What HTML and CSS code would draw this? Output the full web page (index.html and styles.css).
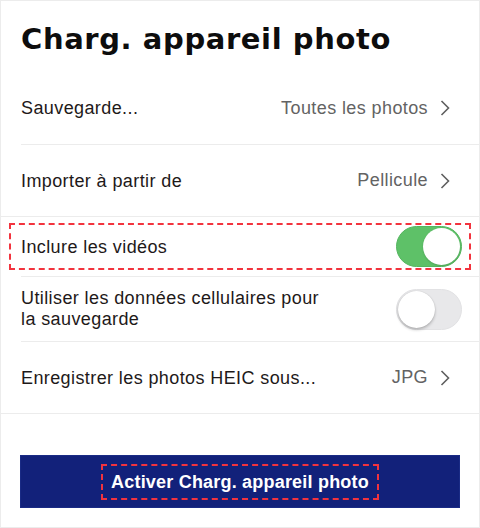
FILE: index.html
```html
<!DOCTYPE html>
<html lang="fr">
<head>
<meta charset="utf-8">
<title>Charg. appareil photo</title>
<link rel="stylesheet" href="styles.css">
</head>
<body>
<div class="page">
  <h1 class="title">Charg. appareil photo</h1>
  <div class="list">
    <div class="row inset h73">
      <span class="label">Sauvegarde...</span>
      <span class="value">Toutes les photos</span>
      <svg class="chev" width="10" height="16" viewBox="0 0 10 16"><path d="M1.5 1 L8.5 8 L1.5 15" fill="none" stroke="#5f5f5f" stroke-width="1.6"/></svg>
    </div>
    <div class="row full h72">
      <span class="label">Importer à partir de</span>
      <span class="value">Pellicule</span>
      <svg class="chev" width="10" height="16" viewBox="0 0 10 16"><path d="M1.5 1 L8.5 8 L1.5 15" fill="none" stroke="#5f5f5f" stroke-width="1.6"/></svg>
    </div>
    <div class="row inset h60 marked">
      <span class="label">Inclure les vidéos</span>
      <span class="switch on"><span class="knob"></span></span>
    </div>
    <div class="row inset h65">
      <span class="label two">Utiliser les données cellulaires pour la sauvegarde</span>
      <span class="switch off"><span class="knob"></span></span>
    </div>
    <div class="row full h72">
      <span class="label">Enregistrer les photos HEIC sous...</span>
      <span class="value">JPG</span>
      <svg class="chev" width="10" height="16" viewBox="0 0 10 16"><path d="M1.5 1 L8.5 8 L1.5 15" fill="none" stroke="#5f5f5f" stroke-width="1.6"/></svg>
    </div>
  </div>
  <div class="footer">
    <button class="cta"><span class="cta-text">Activer Charg. appareil photo</span></button>
  </div>
</div>
</body>
</html>
```

FILE: styles.css
```css
html, body {
  margin: 0;
  padding: 0;
  background: #ffffff;
}

.page {
  width: 480px;
  height: 528px;
  box-sizing: border-box;
  border: 1px solid #ececec;
  font-family: "Liberation Sans", Arial, sans-serif;
  color: #1e1919;
  overflow: hidden;
}

.title {
  margin: 0;
  height: 71px;
  box-sizing: border-box;
  padding: 21px 0 0 20px;
  font-family: "DejaVu Sans", sans-serif;
  font-weight: bold;
  font-size: 29px;
  line-height: 34px;
  letter-spacing: 0.6px;
  color: #0d0d0d;
}

.list {
  display: flex;
  flex-direction: column;
}

.row {
  display: flex;
  align-items: center;
  box-sizing: border-box;
  border-bottom: 1px solid #ececec;
  font-size: 18px;
  letter-spacing: 0.4px;
}

.row.inset {
  margin-left: 20px;
}

.row.full {
  padding-left: 20px;
}

.h73 { height: 73px; }
.h72 { height: 72px; }
.h60 { height: 60px; }
.h65 { height: 65px; }

.label {
  flex: 1;
  line-height: 22px;
}

.label.two {
  flex: 0 0 auto;
  width: 303px;
  line-height: 21px;
  margin-right: auto;
}

.value {
  color: #636363;
  margin-right: 12px;
}

.chev {
  margin-right: 29px;
  display: block;
}

.switch {
  position: relative;
  width: 66px;
  height: 41px;
  border-radius: 21px;
  margin-right: 17px;
  box-sizing: border-box;
  flex: 0 0 auto;
}

.switch.on {
  background: #5ec168;
  border: 1px solid #55b660;
}

.switch.off {
  background: #e8e8ea;
  border: 1px solid #e2e2e4;
}

.knob {
  position: absolute;
  top: 1px;
  width: 37px;
  height: 37px;
  border-radius: 50%;
  background: #ffffff;
}

.switch.on .knob {
  right: 1px;
  box-shadow: 0 1px 2px rgba(0, 0, 0, 0.15);
}

.switch.off .knob {
  left: 1px;
  box-shadow: 0 2px 3px rgba(0, 0, 0, 0.22), 0 0 1px rgba(0, 0, 0, 0.2);
}

.marked {
  position: relative;
}

.marked::after {
  content: "";
  position: absolute;
  left: -12px;
  top: 6px;
  width: 462px;
  height: 47px;
  box-sizing: border-box;
  border: 2px dashed #f2333e;
  pointer-events: none;
}

.footer {
  padding: 41px 0 0 19px;
}

.cta {
  display: flex;
  align-items: center;
  justify-content: center;
  width: 440px;
  height: 53px;
  margin: 0;
  padding: 0;
  border: 1px solid #1a2b85;
  background: #12217a;
  color: #ffffff;
  font-family: "Liberation Sans", Arial, sans-serif;
  font-weight: bold;
  font-size: 18px;
  letter-spacing: 0.2px;
}

.cta-text {
  display: inline-block;
  padding: 0 8px;
  line-height: 32px;
  border: 2px dashed #f2333e;
}
```
